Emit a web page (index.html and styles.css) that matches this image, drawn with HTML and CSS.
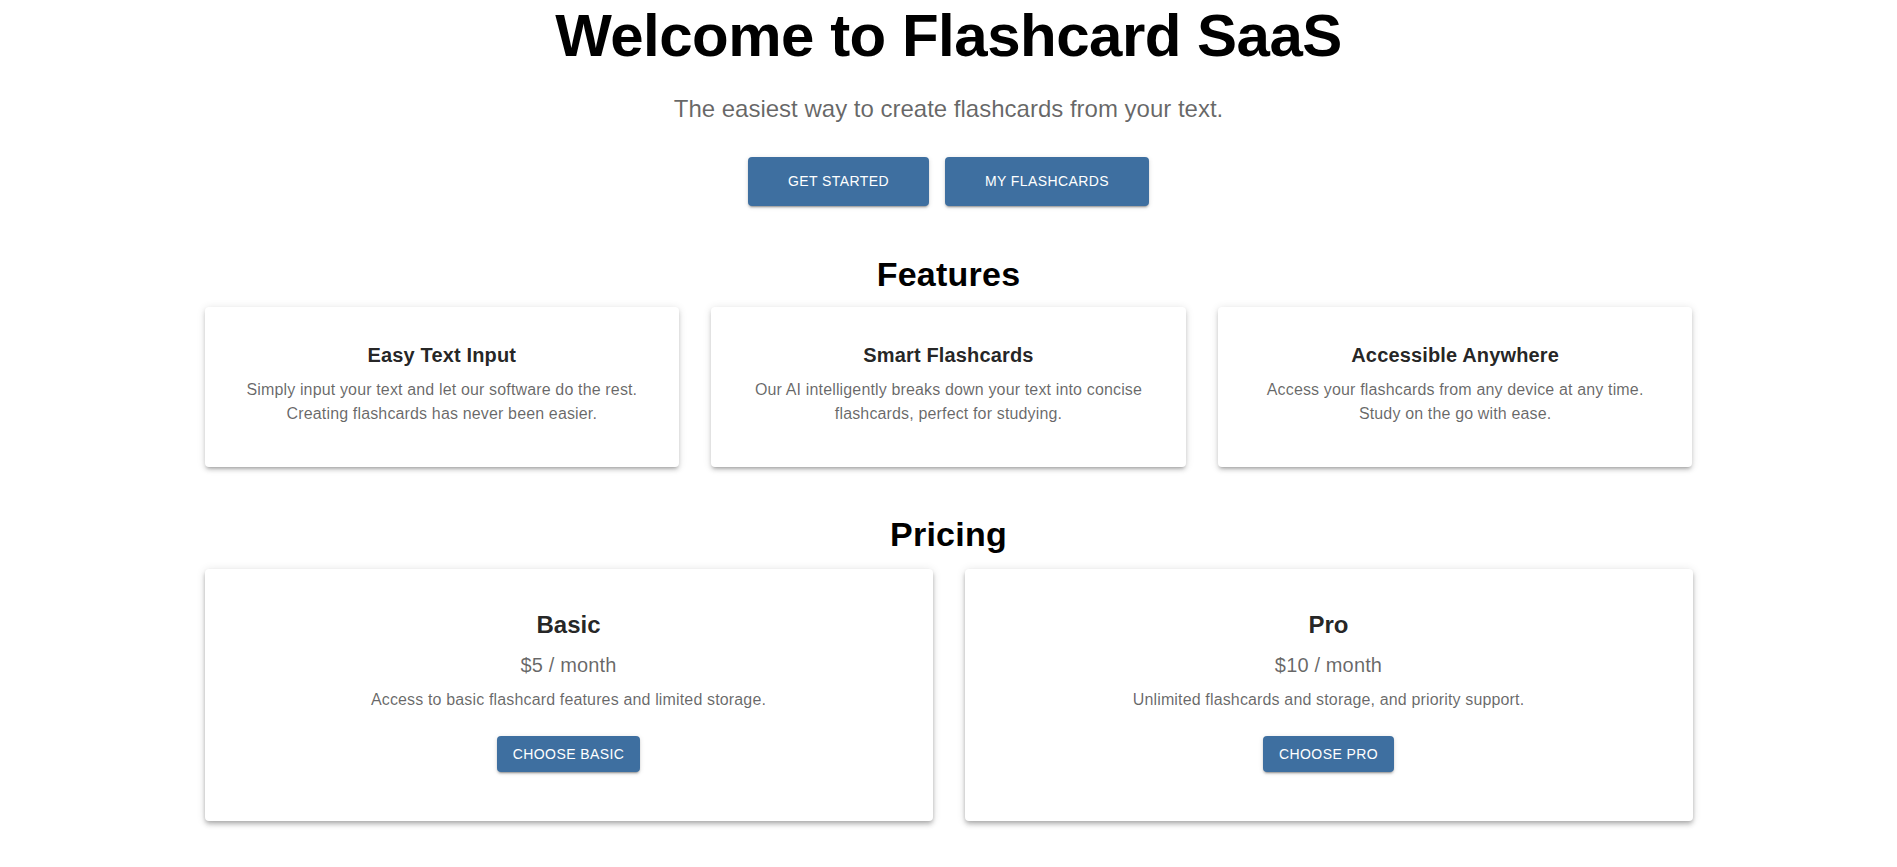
FILE: index.html
```html
<!DOCTYPE html>
<html lang="en">
<head>
<meta charset="utf-8">
<title>Flashcard SaaS</title>
<link rel="stylesheet" href="styles.css">
</head>
<body>
<main class="container">
  <section class="hero">
    <h1 class="hero-title">Welcome to Flashcard SaaS</h1>
    <p class="hero-sub">The easiest way to create flashcards from your text.</p>
    <div class="hero-actions">
      <button class="btn btn-hero" type="button">Get Started</button>
      <button class="btn btn-hero" type="button">My Flashcards</button>
    </div>
  </section>

  <section class="section">
    <h2 class="section-title">Features</h2>
    <div class="grid grid-3">
      <div class="card feature-card">
        <h3 class="feature-title">Easy Text Input</h3>
        <p class="body-text">Simply input your text and let our software do the rest. Creating flashcards has never been easier.</p>
      </div>
      <div class="card feature-card">
        <h3 class="feature-title">Smart Flashcards</h3>
        <p class="body-text">Our AI intelligently breaks down your text into concise flashcards, perfect for studying.</p>
      </div>
      <div class="card feature-card">
        <h3 class="feature-title">Accessible Anywhere</h3>
        <p class="body-text">Access your flashcards from any device at any time. Study on the go with ease.</p>
      </div>
    </div>
  </section>

  <section class="section section-pricing">
    <h2 class="section-title">Pricing</h2>
    <div class="grid grid-2">
      <div class="card price-card">
        <h3 class="plan-name">Basic</h3>
        <p class="plan-price">$5 / month</p>
        <p class="body-text">Access to basic flashcard features and limited storage.</p>
        <button class="btn btn-plan" type="button">Choose Basic</button>
      </div>
      <div class="card price-card">
        <h3 class="plan-name">Pro</h3>
        <p class="plan-price">$10 / month</p>
        <p class="body-text">Unlimited flashcards and storage, and priority support.</p>
        <button class="btn btn-plan" type="button">Choose Pro</button>
      </div>
    </div>
  </section>
</main>
</body>
</html>
```

FILE: styles.css
```css
* {
  box-sizing: border-box;
}

html, body {
  margin: 0;
  padding: 0;
  background: #ffffff;
}

body {
  font-family: "Liberation Sans", Arial, Helvetica, sans-serif;
  color: rgba(0, 0, 0, 0.87);
}

.container {
  max-width: 1536px;
  margin: 0 auto;
  padding: 0 24px 32px;
}

.hero {
  text-align: center;
}

.hero-title {
  margin: 0 0 21px;
  font-size: 60px;
  line-height: 72px;
  font-weight: 700;
  letter-spacing: -0.5px;
  color: #000000;
}

.hero-sub {
  margin: 0;
  font-size: 24px;
  line-height: 32px;
  font-weight: 400;
  color: rgba(0, 0, 0, 0.6);
}

.hero-actions {
  margin-top: 32px;
  display: flex;
  justify-content: center;
  gap: 16px;
}

.btn {
  font-family: "Liberation Sans", Arial, Helvetica, sans-serif;
  font-size: 14px;
  font-weight: 400;
  line-height: 24.5px;
  letter-spacing: 0.4px;
  text-transform: uppercase;
  color: #ffffff;
  background: #3e6fa0;
  border: 0;
  border-radius: 4px;
  box-shadow: 0px 3px 1px -2px rgba(0, 0, 0, 0.2), 0px 2px 2px 0px rgba(0, 0, 0, 0.14), 0px 1px 5px 0px rgba(0, 0, 0, 0.12);
  cursor: pointer;
}

.btn-hero {
  padding: 12px 40px;
}

.btn-plan {
  padding: 6px 16px;
  margin-top: 24px;
}

.section {
  margin-top: 47px;
}

.section-pricing {
  margin-top: 46px;
}

.section-title {
  margin: 0 0 12px;
  text-align: center;
  font-size: 34px;
  line-height: 42px;
  font-weight: 700;
  letter-spacing: 0.25px;
  color: #000000;
}

.section-pricing .section-title {
  margin-bottom: 14px;
}

.grid {
  display: grid;
  gap: 32px;
}

.grid-3 {
  grid-template-columns: repeat(3, 1fr);
}

.grid-2 {
  grid-template-columns: repeat(2, 1fr);
}

.card {
  background: #ffffff;
  border-radius: 4px;
  text-align: center;
}

.feature-card {
  padding: 32px 32px 41px;
  box-shadow: 0px 3px 3px -2px rgba(0, 0, 0, 0.2), 0px 3px 4px 0px rgba(0, 0, 0, 0.14), 0px 1px 8px 0px rgba(0, 0, 0, 0.12);
}

.feature-title {
  margin: 0 0 7px;
  font-size: 20px;
  line-height: 32px;
  font-weight: 700;
  letter-spacing: 0.15px;
  color: rgba(0, 0, 0, 0.87);
}

.body-text {
  margin: 0;
  font-size: 16px;
  line-height: 24px;
  letter-spacing: 0.15px;
  color: rgba(0, 0, 0, 0.6);
}

.price-card {
  padding: 40px 32px 49px;
  box-shadow: 0px 2px 4px -1px rgba(0, 0, 0, 0.2), 0px 4px 5px 0px rgba(0, 0, 0, 0.14), 0px 1px 10px 0px rgba(0, 0, 0, 0.12);
}

.plan-name {
  margin: 0 0 8.4px;
  font-size: 24px;
  line-height: 32px;
  font-weight: 700;
  color: rgba(0, 0, 0, 0.87);
}

.plan-price {
  margin: 0 0 7px;
  font-size: 20px;
  line-height: 32px;
  font-weight: 400;
  letter-spacing: 0.15px;
  color: rgba(0, 0, 0, 0.6);
}
```
